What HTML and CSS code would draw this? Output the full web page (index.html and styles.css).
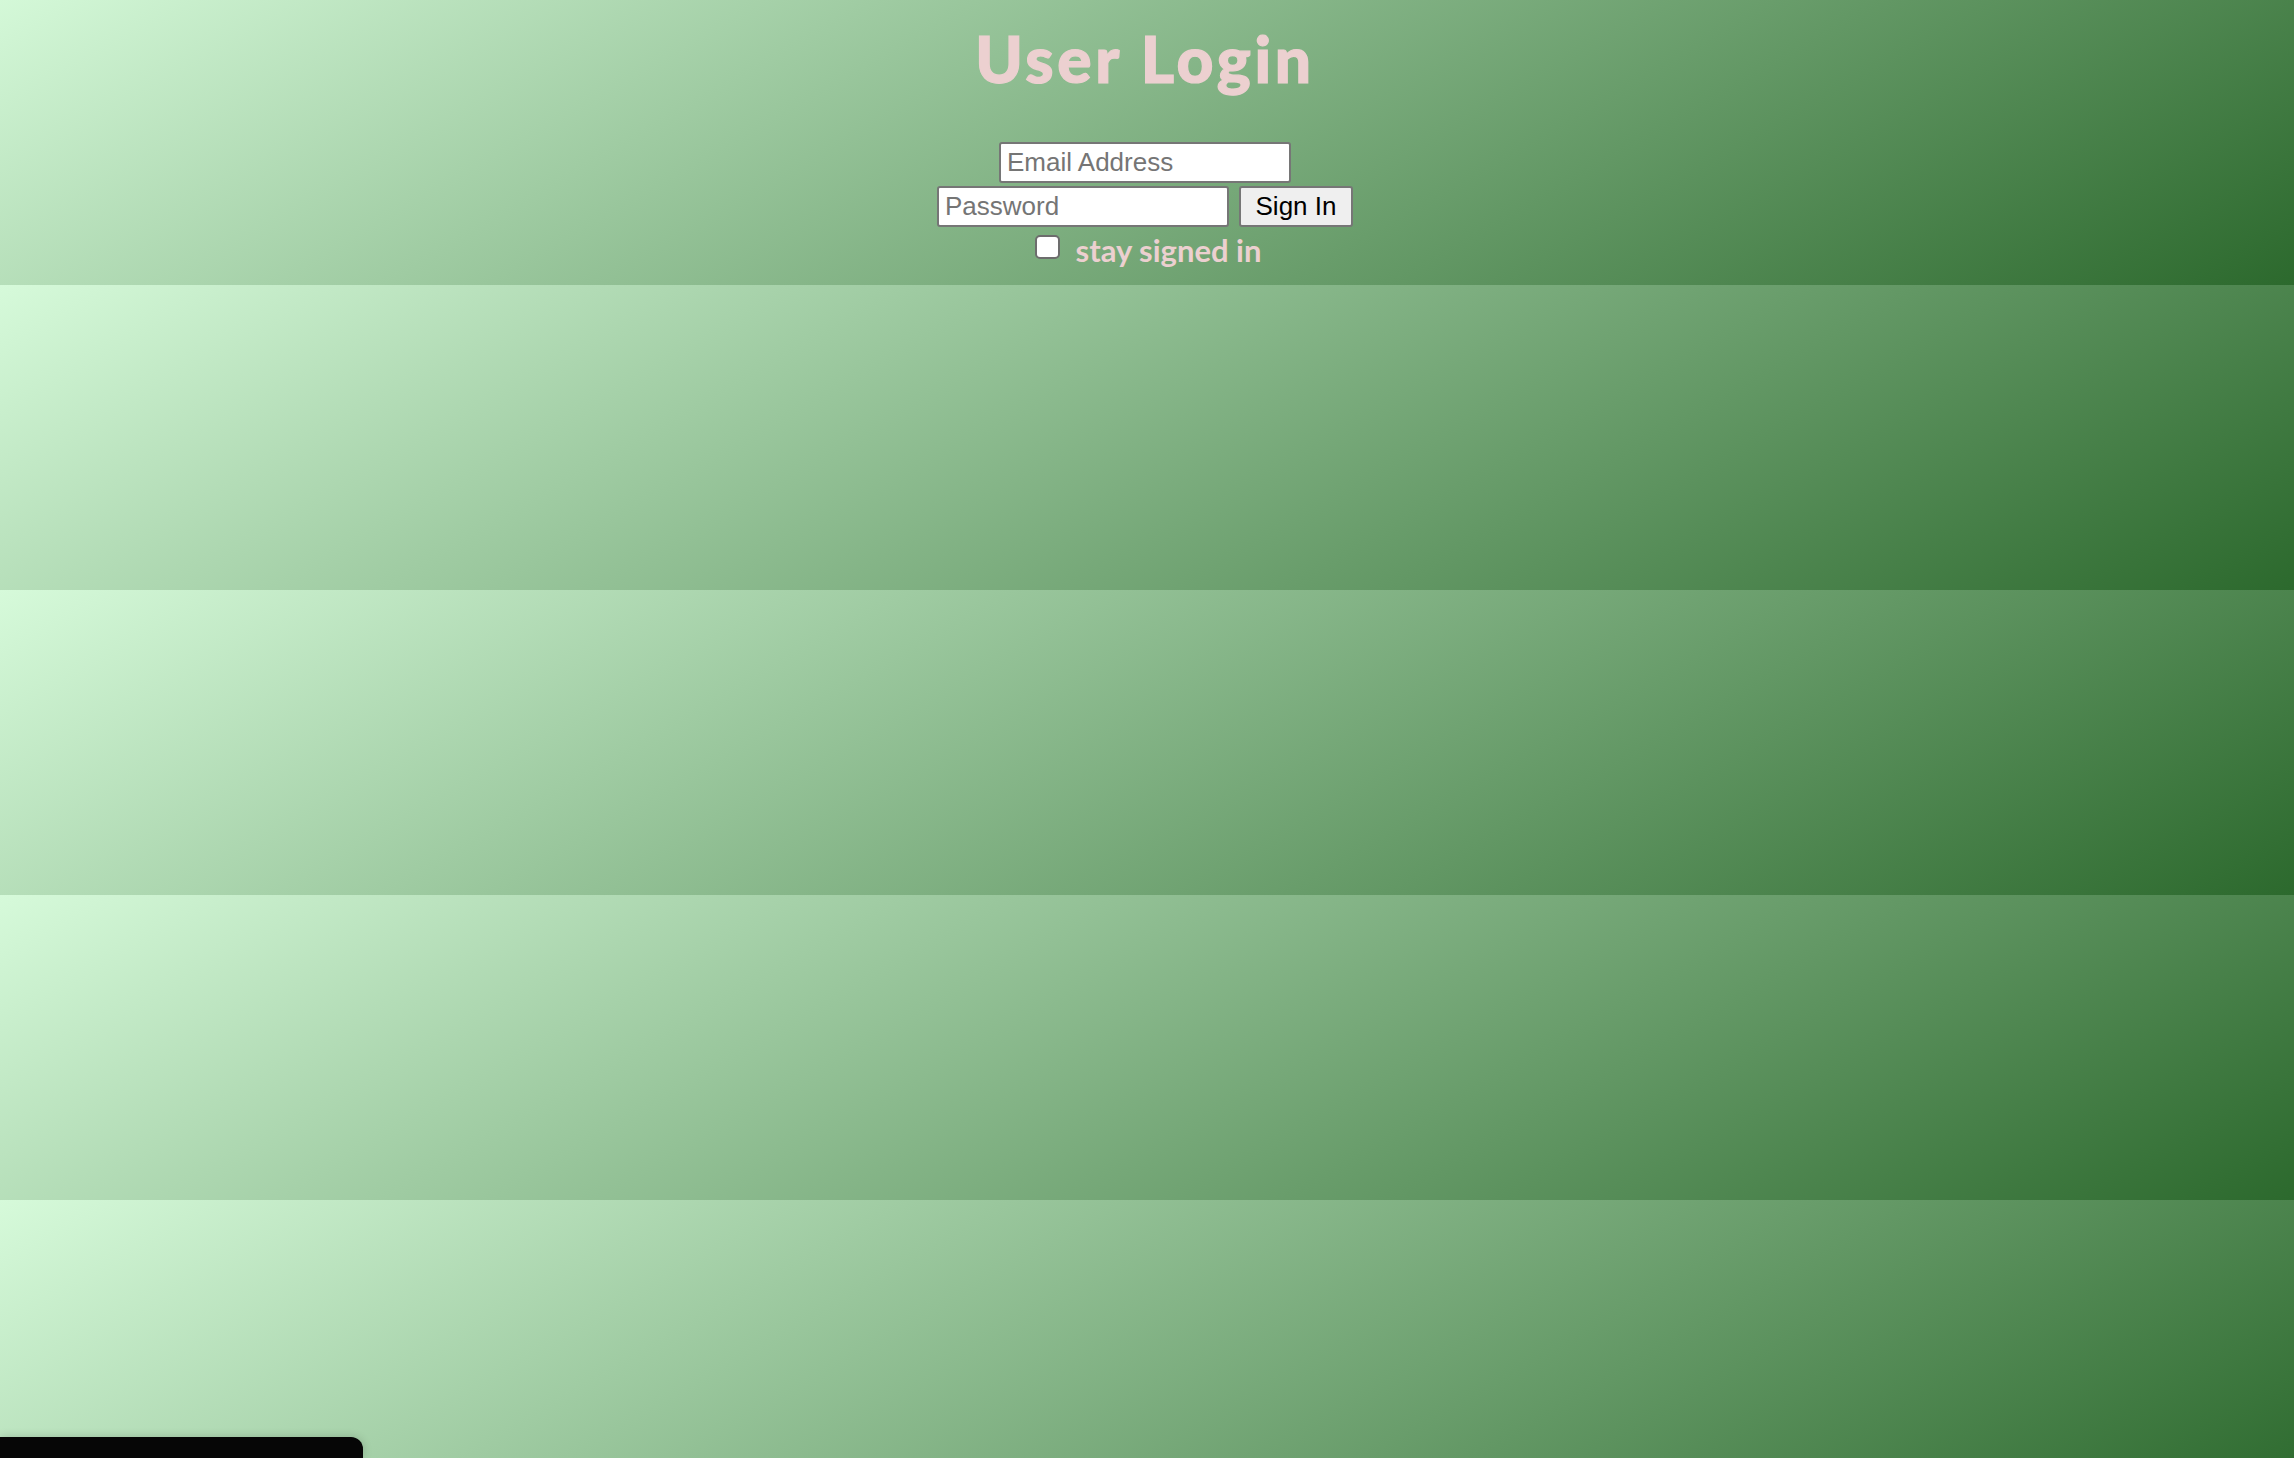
FILE: index.html
```html
<!DOCTYPE html>
<html lang="en">
<head>
<meta charset="utf-8">
<title>User Login</title>
<link rel="stylesheet" href="styles.css">
</head>
<body>
<main class="page">
  <h1 class="title">User Login</h1>
  <form class="login">
    <div class="row">
      <input class="field" type="email" placeholder="Email Address">
    </div>
    <div class="row row-pass">
      <input class="field" type="password" placeholder="Password">
      <button class="btn" type="button">Sign In</button>
    </div>
    <div class="row row-stay">
      <input class="check" type="checkbox" id="stay">
      <label class="stay-label" for="stay">stay signed in</label>
    </div>
  </form>
</main>
<div class="dock"></div>
</body>
</html>
```
FILE: styles.css
```css
html {
  margin: 0;
  padding: 0;
}
body {
  margin: 0;
  padding: 0;
  min-height: 100vh;
  background-image: linear-gradient(150deg, #d6fada, #2c692d);
  background-size: 100% 305px;
  background-repeat: repeat;
  background-position: 0 -20px;
  font-family: "Liberation Sans", Arial, sans-serif;
}
.page {
  display: flex;
  flex-direction: column;
  align-items: center;
  padding-right: 4px;
}
.title {
  margin: 21px 0 0;
  font-family: "Lato", "Liberation Sans", sans-serif;
  font-weight: 900;
  font-size: 64px;
  line-height: 76.8px;
  letter-spacing: 3.7px;
  -webkit-text-stroke: 1.2px #ecd0d0;
  color: #ecd0d0;
}
.login {
  margin-top: 44px;
  display: flex;
  flex-direction: column;
  align-items: center;
}
.row {
  display: flex;
  align-items: flex-start;
}
.row-pass {
  margin-top: 3px;
  gap: 10px;
}
.row-stay {
  gap: 16px;
  padding-left: 6px;
}
.field {
  box-sizing: border-box;
  width: 292px;
  height: 41px;
  margin: 0;
  padding: 0 6px;
  border: 2px solid #767676;
  border-radius: 3px;
  background: #ffffff;
  font-family: "Liberation Sans", Arial, sans-serif;
  font-size: 26px;
  color: #000;
}
.field::placeholder {
  color: #757575;
  opacity: 1;
}
.btn {
  box-sizing: border-box;
  width: 114px;
  height: 41px;
  margin: 0;
  padding: 0;
  border: 2px solid #767676;
  border-radius: 3px;
  background: #efefef;
  font-family: "Liberation Sans", Arial, sans-serif;
  font-size: 26px;
  color: #000;
}
.check {
  appearance: none;
  -webkit-appearance: none;
  box-sizing: border-box;
  width: 25px;
  height: 24px;
  margin: 8px 0 0;
  border: 2px solid #6d6d6d;
  border-radius: 5px;
  background: #ffffff;
}
.stay-label {
  margin-top: 4px;
  font-family: "Lato", "Liberation Sans", sans-serif;
  font-weight: 700;
  font-size: 31px;
  line-height: 38px;
  color: #ecd0d0;
}
.dock {
  position: fixed;
  left: 0;
  bottom: 0;
  width: 363px;
  height: 21px;
  background: #060606;
  border-top-right-radius: 12px;
  box-shadow: 0 0 10px rgba(0, 0, 0, 0.18);
}
```
